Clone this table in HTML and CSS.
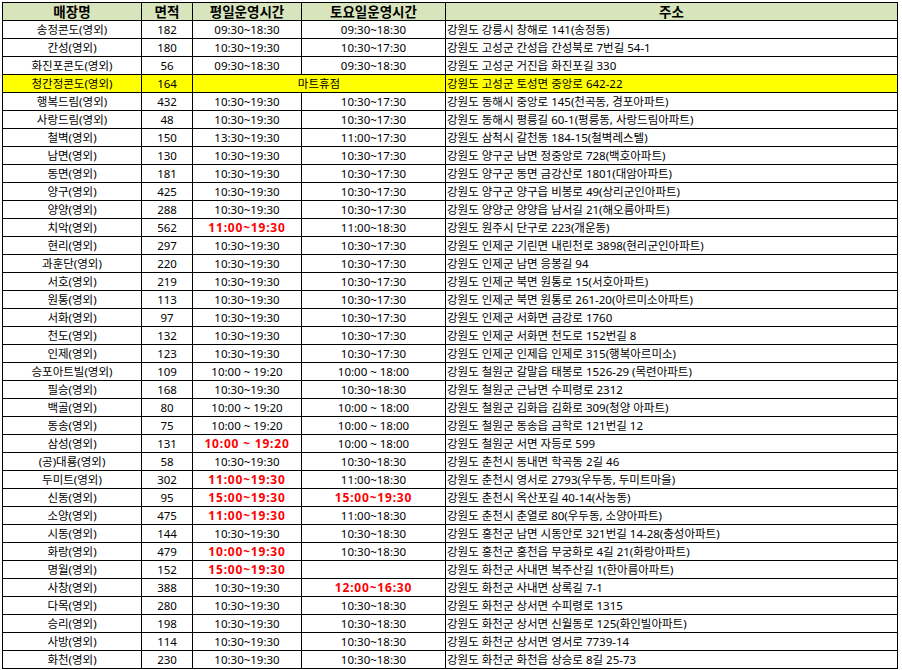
FILE: index.html
```html
<!DOCTYPE html>
<html lang="ko">
<head>
<meta charset="utf-8">
<title>매장 운영시간</title>
<link rel="stylesheet" href="styles.css">
</head>
<body>
<table class="sheet">
<colgroup>
<col class="c-name"><col class="c-area"><col class="c-wk"><col class="c-sat"><col class="c-addr">
</colgroup>
<thead>
<tr><th>매장명</th><th>면적</th><th>평일운영시간</th><th>토요일운영시간</th><th>주소</th></tr>
</thead>
<tbody>
<tr><td>송정콘도(영외)</td><td>182</td><td>09:30~18:30</td><td>09:30~18:30</td><td class="addr">강원도 강릉시 창해로 141(송정동)</td></tr>
<tr><td>간성(영외)</td><td>180</td><td>10:30~19:30</td><td>10:30~17:30</td><td class="addr">강원도 고성군 간성읍 간성북로 7번길 54-1</td></tr>
<tr><td>화진포콘도(영외)</td><td>56</td><td>09:30~18:30</td><td>09:30~18:30</td><td class="addr">강원도 고성군 거진읍 화진포길 330</td></tr>
<tr class="hl"><td>청간정콘도(영외)</td><td>164</td><td colspan="2">마트휴점</td><td class="addr">강원도 고성군 토성면 중앙로 642-22</td></tr>
<tr><td>행복드림(영외)</td><td>432</td><td>10:30~19:30</td><td>10:30~17:30</td><td class="addr">강원도 동해시 중앙로 145(천곡동, 경포아파트)</td></tr>
<tr><td>사랑드림(영외)</td><td>48</td><td>10:30~19:30</td><td>10:30~17:30</td><td class="addr">강원도 동해시 평릉길 60-1(평릉동, 사랑드림아파트)</td></tr>
<tr><td>철벽(영외)</td><td>150</td><td>13:30~19:30</td><td>11:00~17:30</td><td class="addr">강원도 삼척시 갈천동 184-15(철벽레스텔)</td></tr>
<tr><td>남면(영외)</td><td>130</td><td>10:30~19:30</td><td>10:30~17:30</td><td class="addr">강원도 양구군 남면 정중앙로 728(백호아파트)</td></tr>
<tr><td>동면(영외)</td><td>181</td><td>10:30~19:30</td><td>10:30~17:30</td><td class="addr">강원도 양구군 동면 금강산로 1801(대암아파트)</td></tr>
<tr><td>양구(영외)</td><td>425</td><td>10:30~19:30</td><td>10:30~17:30</td><td class="addr">강원도 양구군 양구읍 비봉로 49(상리군인아파트)</td></tr>
<tr><td>양양(영외)</td><td>288</td><td>10:30~19:30</td><td>10:30~17:30</td><td class="addr">강원도 양양군 양양읍 남서길 21(해오름아파트)</td></tr>
<tr><td>치악(영외)</td><td>562</td><td class="red">11:00~19:30</td><td>11:00~18:30</td><td class="addr">강원도 원주시 단구로 223(개운동)</td></tr>
<tr><td>현리(영외)</td><td>297</td><td>10:30~19:30</td><td>10:30~17:30</td><td class="addr">강원도 인제군 기린면 내린천로 3898(현리군인아파트)</td></tr>
<tr><td>과훈단(영외)</td><td>220</td><td>10:30~19:30</td><td>10:30~17:30</td><td class="addr">강원도 인제군 남면 응봉길 94</td></tr>
<tr><td>서호(영외)</td><td>219</td><td>10:30~19:30</td><td>10:30~17:30</td><td class="addr">강원도 인제군 북면 원통로 15(서호아파트)</td></tr>
<tr><td>원통(영외)</td><td>113</td><td>10:30~19:30</td><td>10:30~17:30</td><td class="addr">강원도 인제군 북면 원통로 261-20(아르미소아파트)</td></tr>
<tr><td>서화(영외)</td><td>97</td><td>10:30~19:30</td><td>10:30~17:30</td><td class="addr">강원도 인제군 서화면 금강로 1760</td></tr>
<tr><td>천도(영외)</td><td>132</td><td>10:30~19:30</td><td>10:30~17:30</td><td class="addr">강원도 인제군 서화면 천도로 152번길 8</td></tr>
<tr><td>인제(영외)</td><td>123</td><td>10:30~19:30</td><td>10:30~17:30</td><td class="addr">강원도 인제군 인제읍 인제로 315(행복아르미소)</td></tr>
<tr><td>승포아트빌(영외)</td><td>109</td><td>10:00 ~ 19:20</td><td>10:00 ~ 18:00</td><td class="addr">강원도 철원군 갈말읍 태봉로 1526-29 (목련아파트)</td></tr>
<tr><td>필승(영외)</td><td>168</td><td>10:30~19:30</td><td>10:30~18:30</td><td class="addr">강원도 철원군 근남면 수피령로 2312</td></tr>
<tr><td>백골(영외)</td><td>80</td><td>10:00 ~ 19:20</td><td>10:00 ~ 18:00</td><td class="addr">강원도 철원군 김화읍 김화로 309(청양 아파트)</td></tr>
<tr><td>동송(영외)</td><td>75</td><td>10:00 ~ 19:20</td><td>10:00 ~ 18:00</td><td class="addr">강원도 철원군 동송읍 금학로 121번길 12</td></tr>
<tr><td>삼성(영외)</td><td>131</td><td class="red">10:00 ~ 19:20</td><td>10:00 ~ 18:00</td><td class="addr">강원도 철원군 서면 자등로 599</td></tr>
<tr><td>(공)대룡(영외)</td><td>58</td><td>10:30~19:30</td><td>10:30~18:30</td><td class="addr">강원도 춘천시 동내면 학곡동 2길 46</td></tr>
<tr><td>두미트(영외)</td><td>302</td><td class="red">11:00~19:30</td><td>11:00~18:30</td><td class="addr">강원도 춘천시 영서로 2793(우두동, 두미트마을)</td></tr>
<tr><td>신동(영외)</td><td>95</td><td class="red">15:00~19:30</td><td class="red">15:00~19:30</td><td class="addr">강원도 춘천시 옥산포길 40-14(사농동)</td></tr>
<tr><td>소양(영외)</td><td>475</td><td class="red">11:00~19:30</td><td>11:00~18:30</td><td class="addr">강원도 춘천시 춘열로 80(우두동, 소양아파트)</td></tr>
<tr><td>시동(영외)</td><td>144</td><td>10:30~19:30</td><td>10:30~18:30</td><td class="addr">강원도 홍천군 남면 시동안로 321번길 14-28(충성아파트)</td></tr>
<tr><td>화랑(영외)</td><td>479</td><td class="red">10:00~19:30</td><td>10:30~18:30</td><td class="addr">강원도 홍천군 홍천읍 무궁화로 4길 21(화랑아파트)</td></tr>
<tr><td>명월(영외)</td><td>152</td><td class="red">15:00~19:30</td><td></td><td class="addr">강원도 화천군 사내면 복주산길 1(한아름아파트)</td></tr>
<tr><td>사창(영외)</td><td>388</td><td>10:30~19:30</td><td class="red">12:00~16:30</td><td class="addr">강원도 화천군 사내면 상록길 7-1</td></tr>
<tr><td>다목(영외)</td><td>280</td><td>10:30~19:30</td><td>10:30~18:30</td><td class="addr">강원도 화천군 상서면 수피령로 1315</td></tr>
<tr><td>승리(영외)</td><td>198</td><td>10:30~19:30</td><td>10:30~18:30</td><td class="addr">강원도 화천군 상서면 신월동로 125(화인빌아파트)</td></tr>
<tr><td>사방(영외)</td><td>114</td><td>10:30~19:30</td><td>10:30~18:30</td><td class="addr">강원도 화천군 상서면 영서로 7739-14</td></tr>
<tr><td>화천(영외)</td><td>230</td><td>10:30~19:30</td><td>10:30~18:30</td><td class="addr">강원도 화천군 화천읍 상승로 8길 25-73</td></tr>
</tbody>
</table>
</body>
</html>
```

FILE: styles.css
```css
html, body {
  margin: 0;
  padding: 0;
  background: #ffffff;
}

body {
  padding: 2px 0 0 2px;
  font-family: "Noto Sans", "Noto Sans CJK KR", sans-serif;
  color: #000000;
}

.sheet {
  border-collapse: collapse;
  table-layout: fixed;
  width: 896px;
}

.c-name { width: 139px; }
.c-area { width: 51px; }
.c-wk { width: 109px; }
.c-sat { width: 144px; }
.c-addr { width: 452px; }

.sheet th,
.sheet td {
  border: 1px solid #000000;
  padding: 0 2px;
  height: 17px;
  line-height: 16px;
  text-align: center;
  white-space: nowrap;
  overflow: hidden;
}

.sheet th {
  background: #d8e4bc;
  font-size: 13.5px;
  font-weight: 700;
}

.sheet td {
  font-size: 11.5px;
}

.sheet td.addr {
  text-align: left;
  padding-left: 1px;
}

.sheet td.red {
  color: #ff0000;
  font-weight: 700;
  font-size: 12px;
  letter-spacing: 0.8px;
}

.sheet tr.hl td {
  background: #ffff00;
}
```
